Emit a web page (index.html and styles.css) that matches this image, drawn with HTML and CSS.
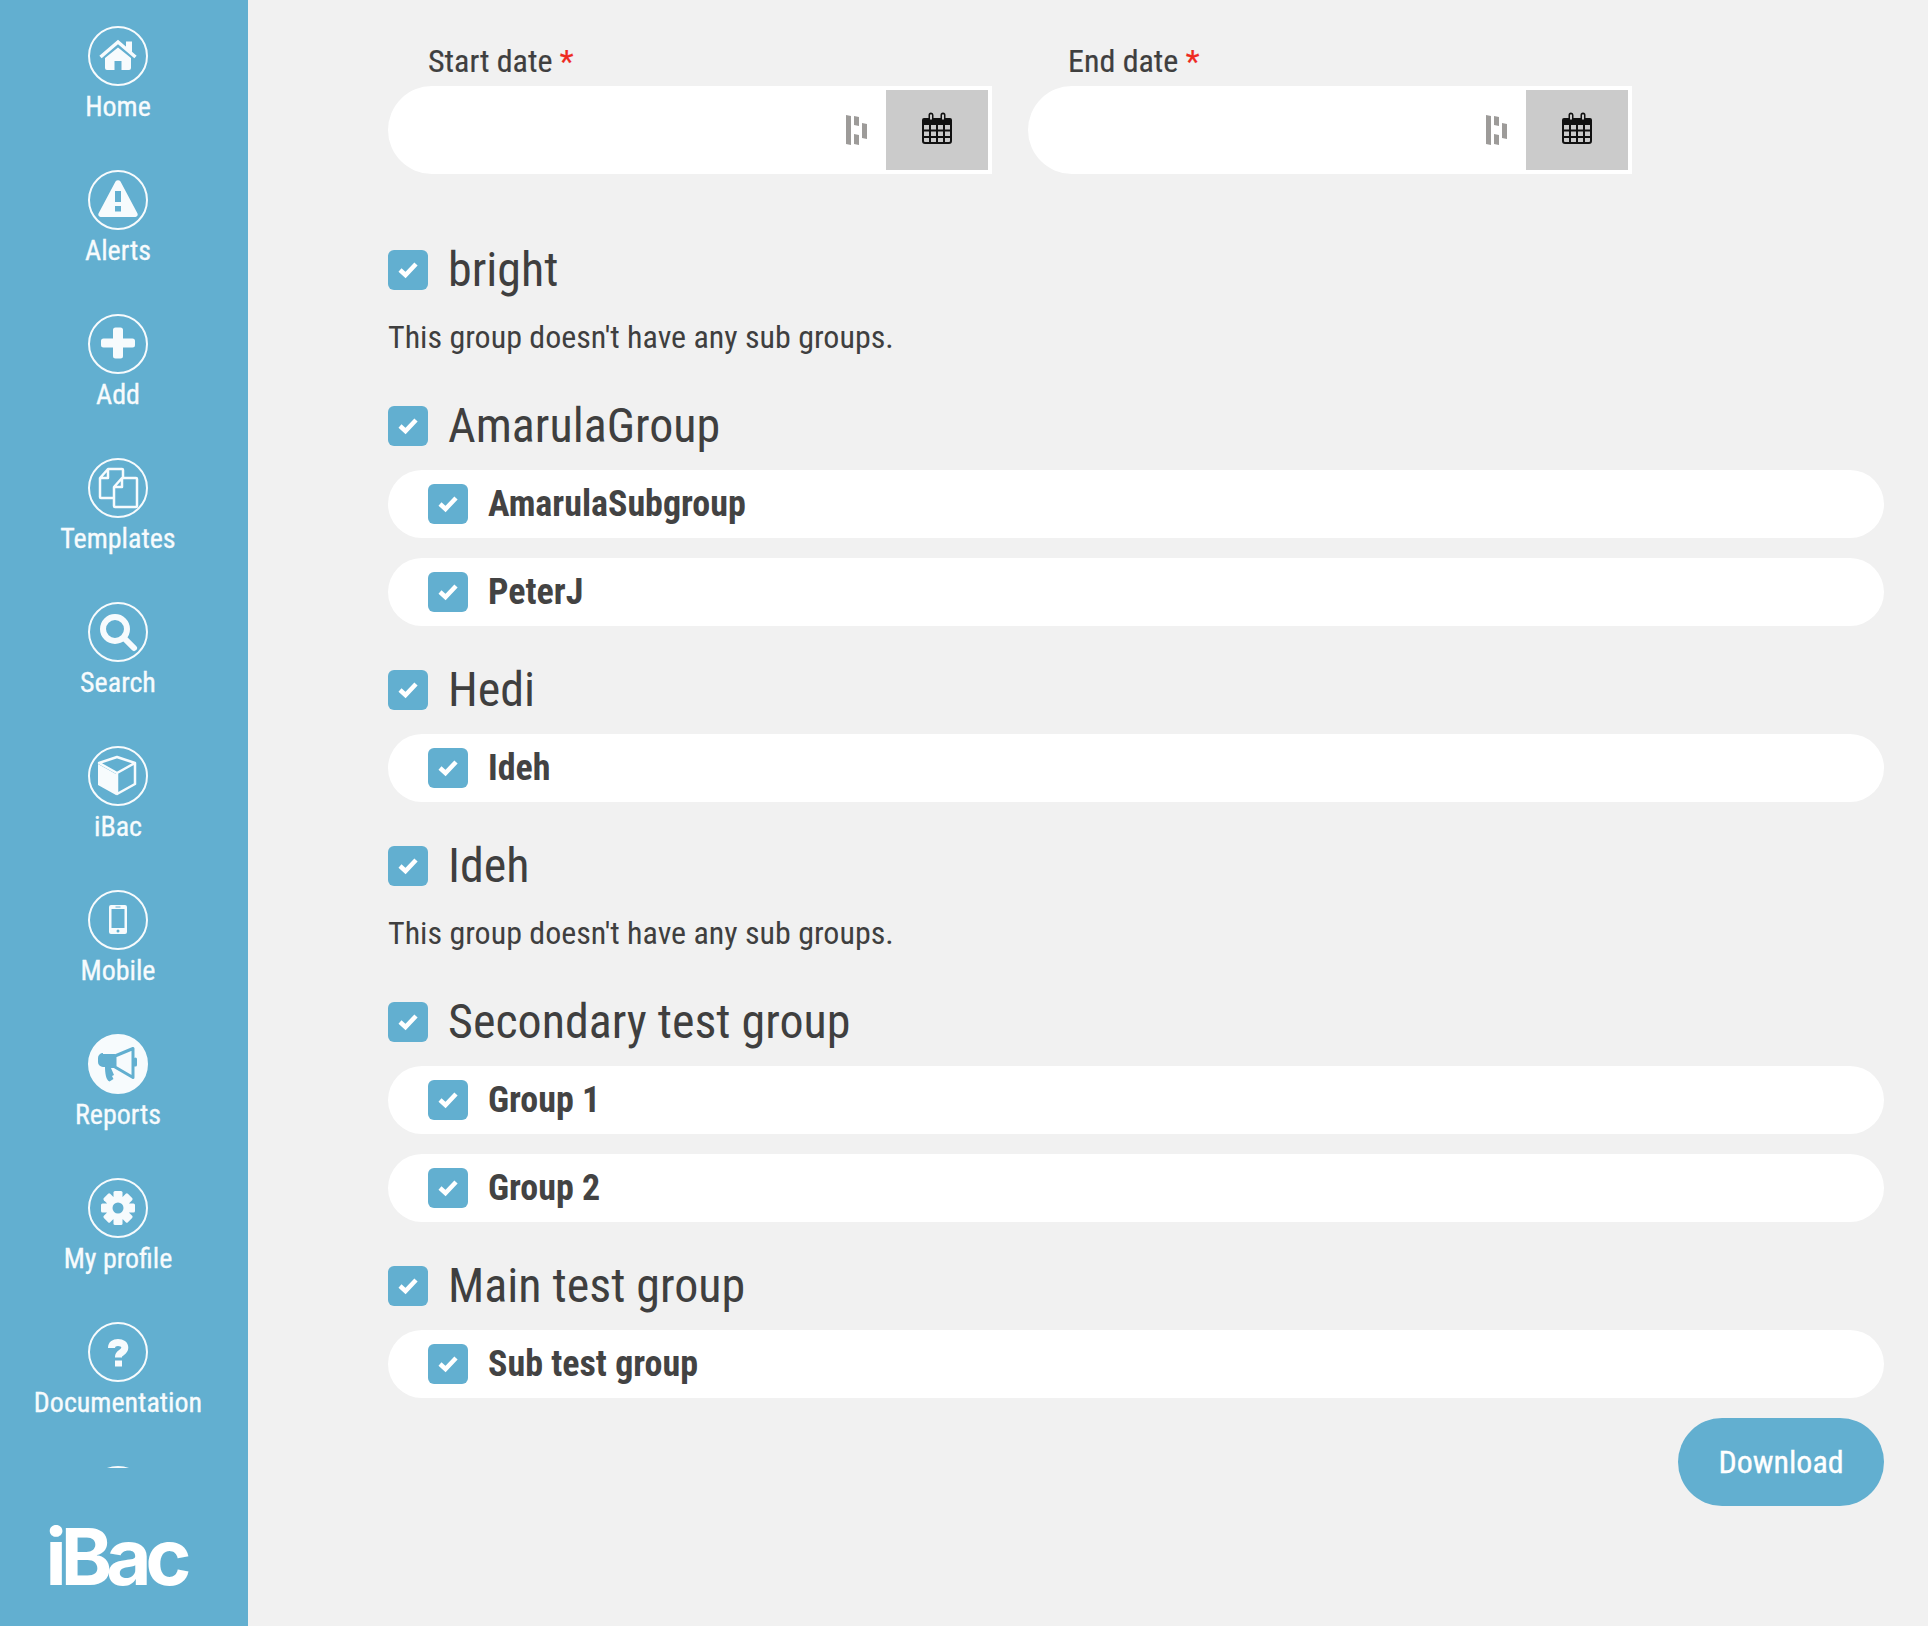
FILE: index.html
```html
<!DOCTYPE html>
<html>
  <head>
    <title>iBac - Reports</title>
    <link rel="stylesheet" href="styles.css">
  </head>
  <body>
    <aside class="sidebar">
      <nav class="nav">
        <a class="nav-item">
          <span class="nav-icon">
            <svg viewBox="0 0 60 60"><path d="M12.500 31 30 16 47.500 31" class="line"/><path d="M38 15.500h6v11l-6-5zM17 32 30 21.500 43 32v10a2 2 0 0 1-2 2h-7.500V35h-7v9H19a2 2 0 0 1-2-2z"/></svg>
          </span>
          <span class="nav-label">Home</span>
        </a>
        <a class="nav-item">
          <span class="nav-icon">
            <svg viewBox="0 0 60 60"><path fill-rule="evenodd" d="M27.500 11.500a3 3 0 0 1 5 0l17 32a2.500 2.500 0 0 1-2 3.500h-35a2.500 2.500 0 0 1-2-3.500zM27 21v11h6V21zM27 36v5.500h6V36z"/></svg>
          </span>
          <span class="nav-label">Alerts</span>
        </a>
        <a class="nav-item">
          <span class="nav-icon">
            <svg viewBox="0 0 60 60"><path d="M25 16a2.500 2.500 0 0 1 2.500-2.500h5A2.500 2.500 0 0 1 35 16v8.500h9.500A2.500 2.500 0 0 1 47 27v4a2.500 2.500 0 0 1-2.500 2.500H35V42a2.500 2.500 0 0 1-2.500 2.500h-5A2.500 2.500 0 0 1 25 42v-8.500h-9.500A2.500 2.500 0 0 1 13 31v-4a2.500 2.500 0 0 1 2.500-2.500H25z"/></svg>
          </span>
          <span class="nav-label">Add</span>
        </a>
        <a class="nav-item">
          <span class="nav-icon">
            <svg viewBox="0 0 60 60"><path class="thin" d="M25 40H13a1 1 0 0 1-1-1V20l8-9h14a1 1 0 0 1 1 1v7M20 11v9h-8"/><path class="thin" d="M27 49a1 1 0 0 1-1-1V29l8-9h14a1 1 0 0 1 1 1v27a1 1 0 0 1-1 1zM34 20v9h-8"/></svg>
          </span>
          <span class="nav-label">Templates</span>
        </a>
        <a class="nav-item">
          <span class="nav-icon">
            <svg viewBox="0 0 60 60"><circle class="lens" cx="27" cy="27" r="12"/><path class="handle" d="M37 37 46 46"/></svg>
          </span>
          <span class="nav-label">Search</span>
        </a>
        <a class="nav-item">
          <span class="nav-icon">
            <svg viewBox="0 0 60 60"><path d="M10 18v21l18 10V28z"/><path class="thin" d="M11 17 29 11 47 17v21L29 48V27zM29 27 47 17"/></svg>
          </span>
          <span class="nav-label">iBac</span>
        </a>
        <a class="nav-item">
          <span class="nav-icon">
            <svg viewBox="0 0 60 60"><path fill-rule="evenodd" d="M23 15h14a2 2 0 0 1 2 2v25a2 2 0 0 1-2 2H23a2 2 0 0 1-2-2V17a2 2 0 0 1 2-2zM23.500 19v19h13V19zM27.500 16.500v1h5v-1zM30 39.500a1.500 1.500 0 1 0 0 3 1.500 1.500 0 0 0 0-3z"/></svg>
          </span>
          <span class="nav-label">Mobile</span>
        </a>
        <a class="nav-item active">
          <span class="nav-icon">
            <svg viewBox="0 0 60 60"><path class="horn" d="M15 20h12v14H23l3 7-2 1 1.500 3-4 2.500c-3.500-1-4.500-9-4.500-14.500h-2a5 5 0 0 1-5-5v-4a5 5 0 0 1 5-5z"/><path class="horn-line" d="M27 22 45 14.500v29L27 33zM47.500 25v6"/></svg>
          </span>
          <span class="nav-label">Reports</span>
        </a>
        <a class="nav-item">
          <span class="nav-icon">
            <svg viewBox="0 0 60 60">
              <g class="cog">
                <rect x="25.500" y="13" width="9" height="34" rx="1.500"/>
                <rect x="25.500" y="13" width="9" height="34" rx="1.500" transform="rotate(45 30 30)"/>
                <rect x="25.500" y="13" width="9" height="34" rx="1.500" transform="rotate(90 30 30)"/>
                <rect x="25.500" y="13" width="9" height="34" rx="1.500" transform="rotate(135 30 30)"/>
              </g>
              <circle class="cog-ring" cx="30" cy="30" r="12"/>
              <circle class="cog-hole" cx="30" cy="30" r="5.500"/>
            </svg>
          </span>
          <span class="nav-label">My profile</span>
        </a>
        <a class="nav-item">
          <span class="nav-icon">
            <svg viewBox="0 0 60 60"><path class="question" d="M23.500 26c0-3.800 2.800-5.500 6.500-5.500 3.900 0 6.800 2 6.800 5.300 0 4.700-6.300 4.700-6.300 8.700v1"/><rect x="27" y="38.500" width="7" height="6"/></svg>
          </span>
          <span class="nav-label">Documentation</span>
        </a>
        <a class="nav-item">
          <span class="nav-icon"></span>
        </a>
      </nav>
      <div class="logo">iBac</div>
    </aside>

    <main class="content">
      <div class="dates">
        <div class="date-field">
          <label class="date-label">Start date <span class="required">*</span></label>
          <div class="date-box">
            <input type="text" class="date-input">
            <svg class="dash-icon" viewBox="0 0 21 30"><path d="M0 0l5 1v29l-5-1zM8 1l5 1v9l-5-1zM8 19l5 1v10l-5-1zM16 8l5 1v15l-5-1z"/></svg>
            <span class="date-button">
              <svg class="cal-icon" viewBox="0 0 30 33"><path class="cal-top" d="M2 7h4.500V4a2.500 2.500 0 0 1 5 0v3h7V4a2.500 2.500 0 0 1 5 0v3H28a2 2 0 0 1 2 2v5H0V9a2 2 0 0 1 2-2z"/><path class="cal-ring" d="M9 3.500v5M21 3.500v5"/><path class="cal-grid" d="M1 13h28v17a2 2 0 0 1-2 2H3a2 2 0 0 1-2-2zM1 19.500h28M1 26h28M8 13v19M15 13v19M22 13v19"/></svg>
            </span>
          </div>
        </div>
        <div class="date-field">
          <label class="date-label">End date <span class="required">*</span></label>
          <div class="date-box">
            <input type="text" class="date-input">
            <svg class="dash-icon" viewBox="0 0 21 30"><path d="M0 0l5 1v29l-5-1zM8 1l5 1v9l-5-1zM8 19l5 1v10l-5-1zM16 8l5 1v15l-5-1z"/></svg>
            <span class="date-button">
              <svg class="cal-icon" viewBox="0 0 30 33"><path class="cal-top" d="M2 7h4.500V4a2.500 2.500 0 0 1 5 0v3h7V4a2.500 2.500 0 0 1 5 0v3H28a2 2 0 0 1 2 2v5H0V9a2 2 0 0 1 2-2z"/><path class="cal-ring" d="M9 3.500v5M21 3.500v5"/><path class="cal-grid" d="M1 13h28v17a2 2 0 0 1-2 2H3a2 2 0 0 1-2-2zM1 19.500h28M1 26h28M8 13v19M15 13v19M22 13v19"/></svg>
            </span>
          </div>
        </div>
      </div>

      <section class="group">
        <div class="group-head">
          <span class="check"><svg viewBox="0 0 40 40"><path d="M12 20l5.500 5L28 14"/></svg></span>
          <h2 class="group-name">bright</h2>
        </div>
        <p class="no-subs">This group doesn't have any sub groups.</p>
      </section>

      <section class="group">
        <div class="group-head">
          <span class="check"><svg viewBox="0 0 40 40"><path d="M12 20l5.500 5L28 14"/></svg></span>
          <h2 class="group-name">AmarulaGroup</h2>
        </div>
        <div class="sub-row">
          <span class="check"><svg viewBox="0 0 40 40"><path d="M12 20l5.500 5L28 14"/></svg></span>
          <span class="sub-name">AmarulaSubgroup</span>
        </div>
        <div class="sub-row">
          <span class="check"><svg viewBox="0 0 40 40"><path d="M12 20l5.500 5L28 14"/></svg></span>
          <span class="sub-name">PeterJ</span>
        </div>
      </section>

      <section class="group">
        <div class="group-head">
          <span class="check"><svg viewBox="0 0 40 40"><path d="M12 20l5.500 5L28 14"/></svg></span>
          <h2 class="group-name">Hedi</h2>
        </div>
        <div class="sub-row">
          <span class="check"><svg viewBox="0 0 40 40"><path d="M12 20l5.500 5L28 14"/></svg></span>
          <span class="sub-name">Ideh</span>
        </div>
      </section>

      <section class="group">
        <div class="group-head">
          <span class="check"><svg viewBox="0 0 40 40"><path d="M12 20l5.500 5L28 14"/></svg></span>
          <h2 class="group-name">Ideh</h2>
        </div>
        <p class="no-subs">This group doesn't have any sub groups.</p>
      </section>

      <section class="group">
        <div class="group-head">
          <span class="check"><svg viewBox="0 0 40 40"><path d="M12 20l5.500 5L28 14"/></svg></span>
          <h2 class="group-name">Secondary test group</h2>
        </div>
        <div class="sub-row">
          <span class="check"><svg viewBox="0 0 40 40"><path d="M12 20l5.500 5L28 14"/></svg></span>
          <span class="sub-name">Group 1</span>
        </div>
        <div class="sub-row">
          <span class="check"><svg viewBox="0 0 40 40"><path d="M12 20l5.500 5L28 14"/></svg></span>
          <span class="sub-name">Group 2</span>
        </div>
      </section>

      <section class="group">
        <div class="group-head">
          <span class="check"><svg viewBox="0 0 40 40"><path d="M12 20l5.500 5L28 14"/></svg></span>
          <h2 class="group-name">Main test group</h2>
        </div>
        <div class="sub-row">
          <span class="check"><svg viewBox="0 0 40 40"><path d="M12 20l5.500 5L28 14"/></svg></span>
          <span class="sub-name">Sub test group</span>
        </div>
      </section>

      <div class="actions">
        <button class="download">Download</button>
      </div>
    </main>
  </body>
</html>
```

FILE: styles.css
```css
* {
  box-sizing: border-box;
}
body {
  margin: 0;
  display: flex;
  min-height: 1626px;
  background-color: #f1f1f1;
  color: #3f3f3f;
  font-family: Roboto, "Liberation Sans", sans-serif;
  font-stretch: 75%;
}
.sidebar {
  width: 248px;
  height: 1626px;
  flex: none;
  background-color: #62afd0;
  overflow: hidden;
}
.nav {
  width: 236px;
  height: 1468px;
  padding-top: 26px;
  overflow: hidden;
}
.nav-item {
  display: flex;
  flex-direction: column;
  align-items: center;
  height: 144px;
  color: #f7fbfd;
}
.nav-icon {
  width: 60px;
  height: 60px;
  flex: none;
  border: 2px solid #f7fbfd;
  border-radius: 50%;
}
.nav-icon svg {
  display: block;
  width: 60px;
  height: 60px;
  margin: -2px;
  fill: #f7fbfd;
}
.nav-label {
  margin-top: 3px;
  font-size: 28px;
  line-height: 36px;
  -webkit-text-stroke: 0.3px #f7fbfd;
}
.active .nav-icon {
  background-color: #f7fbfd;
}
.line {
  fill: none;
  stroke: #f7fbfd;
  stroke-width: 3.5;
}
.thin {
  fill: none;
  stroke: #f7fbfd;
  stroke-width: 2.500;
  stroke-linejoin: round;
}
.lens {
  fill: none;
  stroke: #f7fbfd;
  stroke-width: 6;
}
.handle {
  fill: none;
  stroke: #f7fbfd;
  stroke-width: 6;
  stroke-linecap: round;
}
.nav-icon .horn {
  fill: #62afd0;
}
.horn-line {
  fill: none;
  stroke: #62afd0;
  stroke-width: 3;
  stroke-linejoin: round;
  stroke-linecap: round;
}
.cog-ring {
  fill: #f7fbfd;
}
.nav-icon .cog-hole {
  fill: #62afd0;
}
.question {
  fill: none;
  stroke: #f7fbfd;
  stroke-width: 7;
}
.logo {
  width: 236px;
  margin-top: 44px;
  padding-right: 5px;
  text-align: center;
  color: #fff;
  font-family: Inter, sans-serif;
  font-stretch: normal;
  font-size: 78px;
  font-weight: 700;
  line-height: 90px;
  letter-spacing: -6px;
}
.content {
  flex: 1;
  padding: 0 44px 0 140px;
}
.dates {
  display: flex;
  gap: 36px;
  padding-top: 40px;
  margin-bottom: 76px;
}
.date-field {
  width: 604px;
}
.date-label {
  display: block;
  height: 46px;
  padding-left: 40px;
  font-size: 32px;
  line-height: 42px;
  -webkit-text-stroke: 0.2px #3f3f3f;
}
.required {
  color: #ee2a1f;
  -webkit-text-stroke: 0.2px #ee2a1f;
}
.date-box {
  display: flex;
  align-items: center;
  height: 88px;
  padding: 4px;
  background-color: #fff;
  border-radius: 44px 0 0 44px;
}
.date-input {
  flex: 1;
  min-width: 0;
  height: 80px;
  border: 0;
  outline: 0;
  background: none;
}
.dash-icon {
  width: 21px;
  height: 30px;
  margin-right: 19px;
  fill: #9d9b99;
}
.date-button {
  display: flex;
  align-items: center;
  justify-content: center;
  width: 102px;
  height: 80px;
  background-color: #cbcbcb;
}
.cal-icon {
  width: 30px;
  height: 33px;
  margin-bottom: 5px;
}
.cal-top {
  fill: #111;
}
.cal-ring {
  fill: none;
  stroke: #cbcbcb;
  stroke-width: 2;
}
.cal-grid {
  fill: none;
  stroke: #111;
  stroke-width: 2;
}
.group {
  margin-bottom: 44px;
}
.group-head {
  display: flex;
  align-items: center;
  height: 40px;
}
.check {
  display: block;
  width: 40px;
  height: 40px;
  flex: none;
  background-color: #62afd0;
  border-radius: 6px;
}
.check svg {
  display: block;
  fill: none;
  stroke: #fff;
  stroke-width: 4.500;
}
.group-name {
  margin: 0 0 0 20px;
  font-size: 48px;
  font-weight: 400;
  line-height: 56px;
}
.no-subs {
  margin: 23px 0 0;
  padding-bottom: 1px;
  font-size: 32px;
  line-height: 48px;
}
.sub-row {
  display: flex;
  align-items: center;
  height: 68px;
  margin-top: 20px;
  padding-left: 40px;
  background-color: #fff;
  border-radius: 34px;
}
.group-head + .sub-row {
  margin-top: 24px;
}
.sub-name {
  margin-left: 20px;
  font-size: 36px;
  font-weight: 700;
  color: #434343;
}
.group:last-of-type {
  margin-bottom: 20px;
}
.actions {
  display: flex;
  justify-content: flex-end;
}
.download {
  width: 206px;
  height: 88px;
  border: 0;
  border-radius: 44px;
  background-color: #62afd0;
  color: #fff;
  font-family: inherit;
  font-stretch: inherit;
  font-size: 32px;
  -webkit-text-stroke: 0.3px #fff;
}
```
